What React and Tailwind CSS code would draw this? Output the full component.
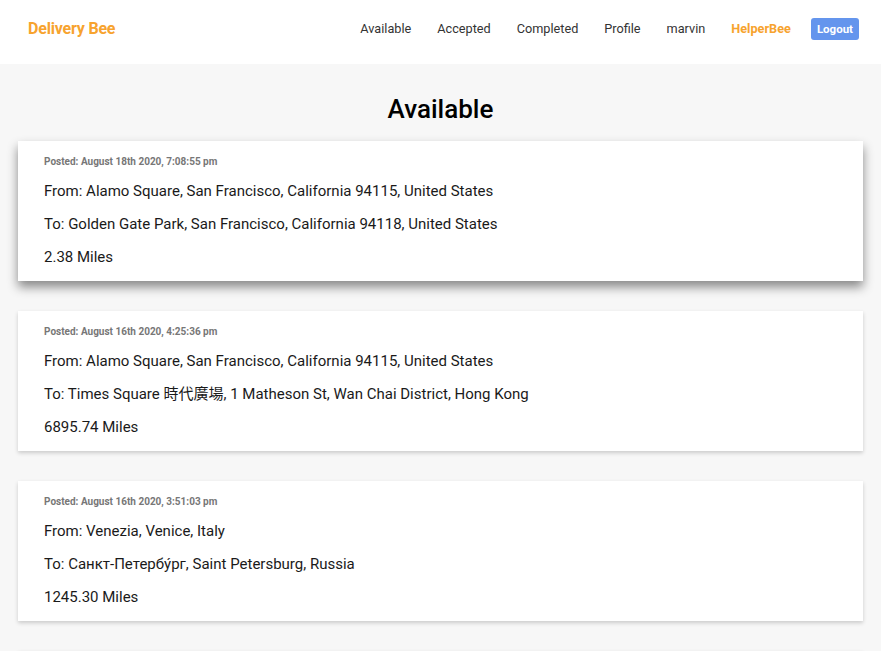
import React from "react";

const jobs = [
  {
    posted: "Posted: August 18th 2020, 7:08:55 pm",
    from: "From: Alamo Square, San Francisco, California 94115, United States",
    to: "To: Golden Gate Park, San Francisco, California 94118, United States",
    miles: "2.38 Miles",
    hover: true,
  },
  {
    posted: "Posted: August 16th 2020, 4:25:36 pm",
    from: "From: Alamo Square, San Francisco, California 94115, United States",
    to: "To: Times Square 時代廣場, 1 Matheson St, Wan Chai District, Hong Kong",
    miles: "6895.74 Miles",
  },
  {
    posted: "Posted: August 16th 2020, 3:51:03 pm",
    from: "From: Venezia, Venice, Italy",
    to: "To: Санкт-Петербу́рг, Saint Petersburg, Russia",
    miles: "1245.30 Miles",
  },
  { posted: "", from: "", to: "", miles: "" },
];

export default function App() {
  return (
    <div
      className="min-h-screen bg-[#f7f7f7] text-[#222]"
      style={{ fontFamily: 'Roboto, "Noto Sans CJK TC", sans-serif' }}
    >
      <header className="h-16 bg-white flex items-center justify-between pl-7 pr-[22px] pb-[6px]">
        <div className="text-[16px] font-bold text-[#f7a32e] tracking-[-0.2px]">Delivery Bee</div>
        <nav className="flex items-center gap-[26px] text-[12.7px] text-[#333]">
          <span>Available</span>
          <span>Accepted</span>
          <span>Completed</span>
          <span>Profile</span>
          <span>marvin</span>
          <span className="font-bold text-[#f7a32e]">HelperBee</span>
          <span className="ml-[-6px] bg-[#6495ed] text-white font-bold text-[11.5px] rounded-[3px] px-[6px] py-[4px] leading-[14px]">
            Logout
          </span>
        </nav>
      </header>
      <main className="px-[18px]">
        <h1 className="text-center text-[26px] font-medium pt-[28px] pb-[15px] leading-[34px] text-black">Available</h1>
        <div className="flex flex-col gap-[30px]">
          {jobs.map((j, i) => (
            <div
              key={i}
              className={
                "bg-white h-[140px] pl-[26px] pt-[15px] " +
                (j.hover
                  ? "shadow-[0_6px_10px_rgba(0,0,0,0.45)]"
                  : "shadow-[0_2px_4px_rgba(0,0,0,0.18)]")
              }
            >
              <div className="text-[10px] font-bold text-[#777] leading-[12px]">{j.posted}</div>
              <div className="text-[15px] font-normal leading-[33px] mt-[7px] text-[#1a1a1a]">{j.from}</div>
              <div className="text-[15px] font-normal leading-[33px] text-[#1a1a1a]">{j.to}</div>
              <div className="text-[15px] font-normal leading-[33px] text-[#1a1a1a]">{j.miles}</div>
            </div>
          ))}
        </div>
      </main>
    </div>
  );
}
